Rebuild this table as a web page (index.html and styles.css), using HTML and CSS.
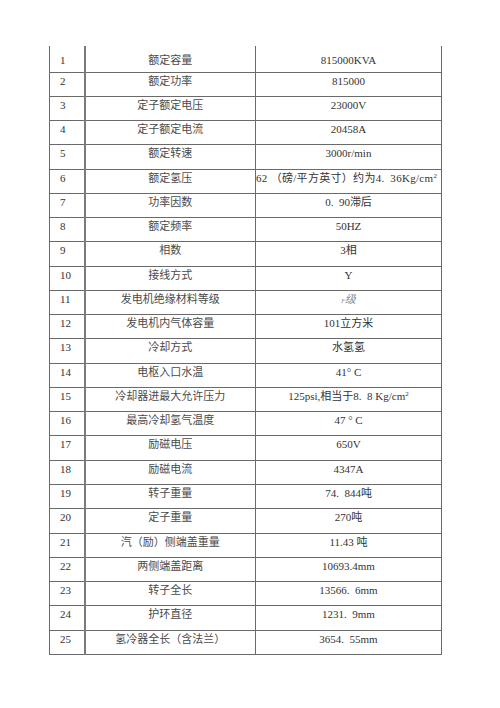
FILE: index.html
```html
<!DOCTYPE html>
<html lang="zh">
<head>
<meta charset="utf-8">
<title>发电机参数</title>
<link rel="stylesheet" href="styles.css">
</head>
<body>
<table class="spec">
  <colgroup>
    <col class="c-no">
    <col class="c-name">
    <col class="c-val">
  </colgroup>
  <tbody>
    <tr class="first"><td class="no">1</td><td class="name">额定容量</td><td class="val">815000KVA</td></tr>
    <tr><td class="no">2</td><td class="name">额定功率</td><td class="val">815000</td></tr>
    <tr><td class="no">3</td><td class="name">定子额定电压</td><td class="val">23000V</td></tr>
    <tr><td class="no">4</td><td class="name">定子额定电流</td><td class="val">20458A</td></tr>
    <tr><td class="no">5</td><td class="name">额定转速</td><td class="val">3000r/min</td></tr>
    <tr><td class="no">6</td><td class="name">额定氢压</td><td class="val wide"><span class="wide-in">62 （磅/平方英寸）约为4.&ensp;36Kg/cm<sup>2</sup></span></td></tr>
    <tr><td class="no">7</td><td class="name">功率因数</td><td class="val">0.&ensp;90滞后</td></tr>
    <tr><td class="no">8</td><td class="name">额定频率</td><td class="val">50HZ</td></tr>
    <tr><td class="no">9</td><td class="name">相数</td><td class="val">3相</td></tr>
    <tr><td class="no">10</td><td class="name">接线方式</td><td class="val">Y</td></tr>
    <tr><td class="no">11</td><td class="name">发电机绝缘材料等级</td><td class="val"><span class="faded"><span class="tiny">F</span>级</span></td></tr>
    <tr><td class="no">12</td><td class="name">发电机内气体容量</td><td class="val">101立方米</td></tr>
    <tr><td class="no">13</td><td class="name">冷却方式</td><td class="val">水氢氢</td></tr>
    <tr><td class="no">14</td><td class="name">电枢入口水温</td><td class="val">41° C</td></tr>
    <tr><td class="no">15</td><td class="name">冷却器进最大允许压力</td><td class="val">125psi,相当于8.&ensp;8 Kg/cm<sup>2</sup></td></tr>
    <tr><td class="no">16</td><td class="name">最高冷却氢气温度</td><td class="val">47 ° C</td></tr>
    <tr><td class="no">17</td><td class="name">励磁电压</td><td class="val">650V</td></tr>
    <tr><td class="no">18</td><td class="name">励磁电流</td><td class="val">4347A</td></tr>
    <tr><td class="no">19</td><td class="name">转子重量</td><td class="val">74.&ensp;844吨</td></tr>
    <tr><td class="no">20</td><td class="name">定子重量</td><td class="val">270吨</td></tr>
    <tr><td class="no">21</td><td class="name">汽（励）侧端盖重量</td><td class="val">11.43 吨</td></tr>
    <tr><td class="no">22</td><td class="name">两侧端盖距离</td><td class="val">10693.4mm</td></tr>
    <tr><td class="no">23</td><td class="name">转子全长</td><td class="val">13566.&ensp;6mm</td></tr>
    <tr><td class="no">24</td><td class="name">护环直径</td><td class="val">1231.&ensp;9mm</td></tr>
    <tr><td class="no">25</td><td class="name">氢冷器全长（含法兰）</td><td class="val">3654.&ensp;55mm</td></tr>
  </tbody>
</table>
</body>
</html>
```

FILE: styles.css
```css
html, body {
  margin: 0;
  padding: 0;
  background: #ffffff;
}

body {
  padding: 46px 0 0 49px;
  font-family: "Liberation Serif", "Noto Sans CJK SC", serif;
  font-size: 11px;
  color: #333333;
}

.spec {
  border-collapse: collapse;
  table-layout: fixed;
  width: 392px;
}

.c-no { width: 35px; }
.c-name { width: 171px; }
.c-val { width: 186px; }

.spec td {
  border: 1px solid #6a6a6a;
  height: 24.28px;
  padding: 2px 0 0 0;
  vertical-align: top;
  line-height: 13px;
  white-space: nowrap;
  box-sizing: border-box;
}

.spec tr.first td {
  border-top: none;
  height: 26px;
  padding-top: 8px;
}

.spec td.no {
  padding-left: 10px;
  border-right: 2px solid #7a7a7a;
}

.spec td.name {
  text-align: center;
  color: #4a4a4a;
}

.spec td.val {
  text-align: center;
}

.spec td.wide {
  text-align: left;
  overflow: hidden;
  padding-left: 0;
}

.wide-in {
  display: inline-block;
  letter-spacing: 0.3px;
}

sup {
  font-size: 7px;
  line-height: 0;
  vertical-align: 4px;
}

.faded {
  color: #8a8a8a;
  font-style: italic;
}

.tiny {
  font-size: 6px;
}
```
